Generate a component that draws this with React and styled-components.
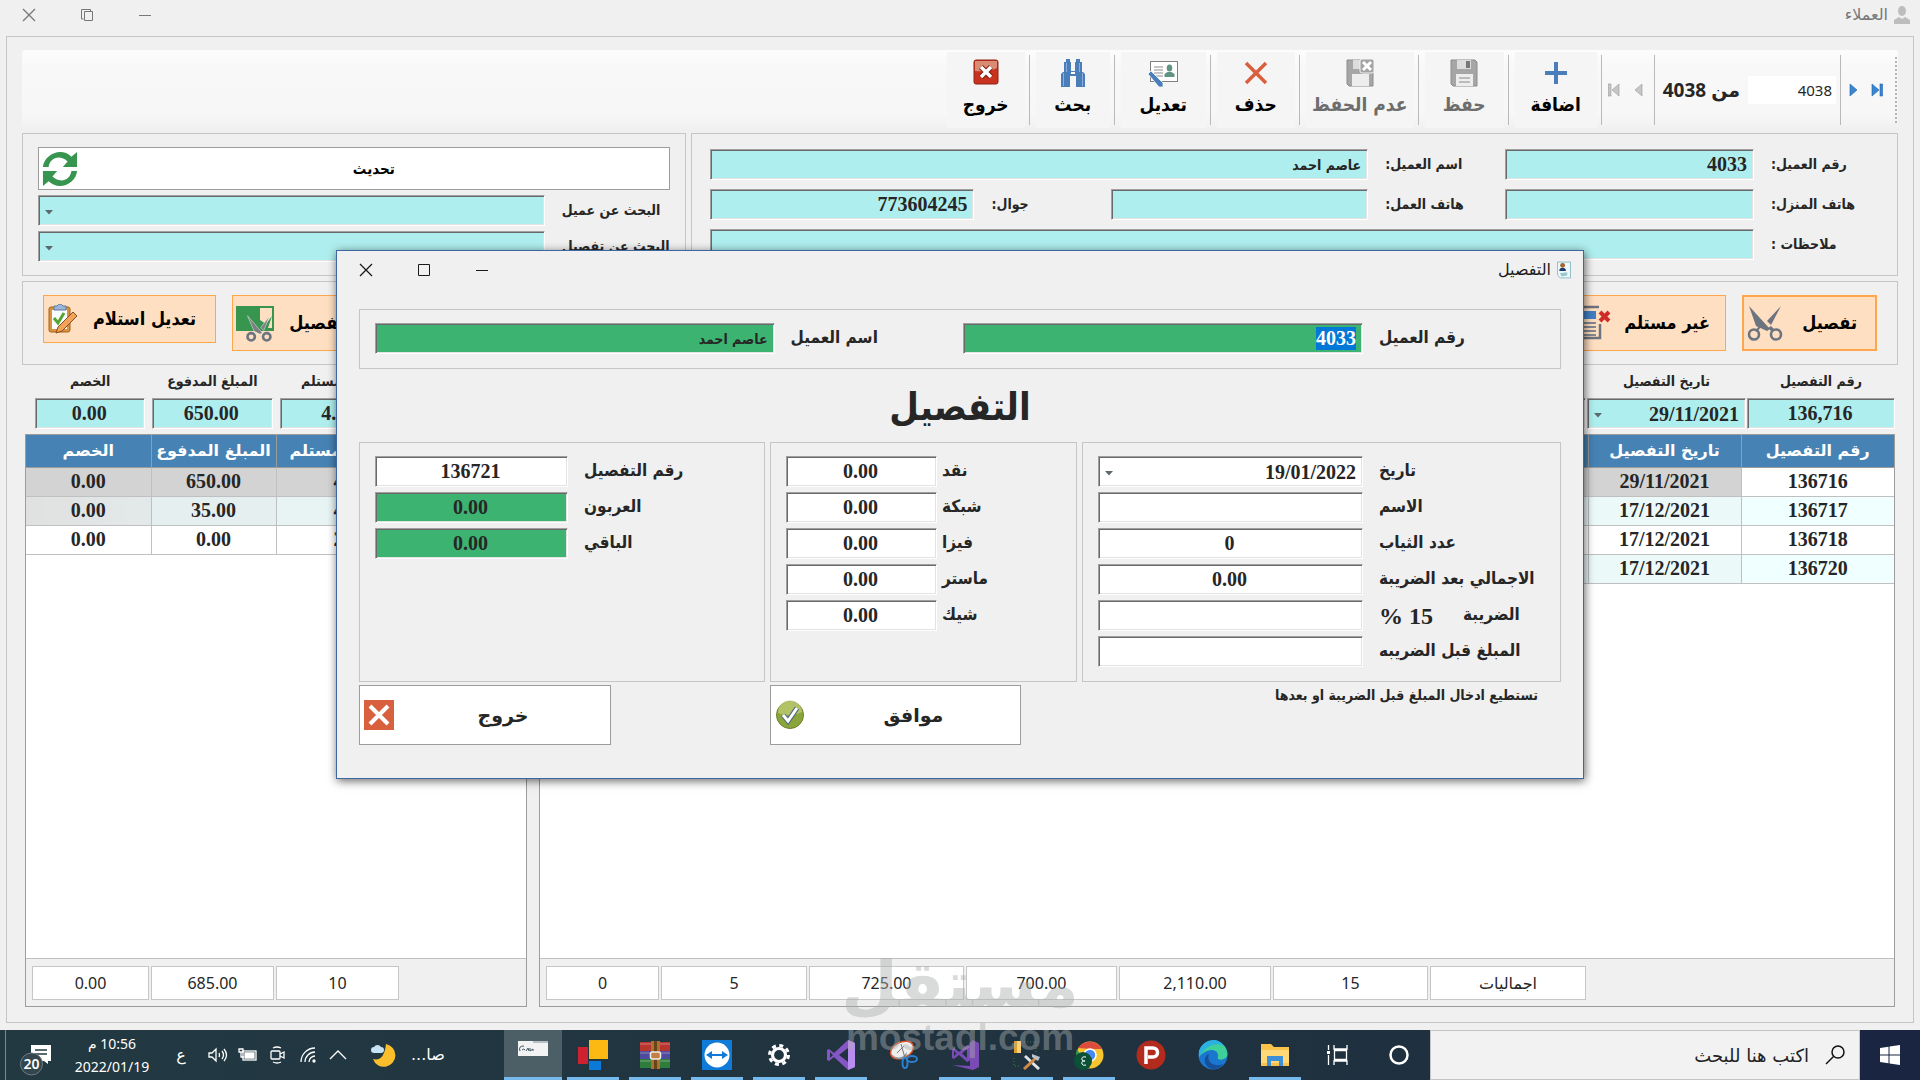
import React, { useEffect, useRef } from "react";
import styled, { createGlobalStyle, css } from "styled-components";

const Global = createGlobalStyle`
  *, *::before, *::after { box-sizing: border-box; }
  html, body { margin: 0; padding: 0; background: #f0f0f0; }
  body { font-family: "Noto Sans", "DejaVu Sans", sans-serif; color: #262626; }
  button, input, select { margin: 0; font: inherit; color: inherit; border-radius: 0; outline: none; }
  button { cursor: pointer; }
`;

const serif = `"Liberation Serif", "DejaVu Sans", serif`;
const sans = `"Noto Sans", "DejaVu Sans", sans-serif`;
const arabic = `"DejaVu Sans", sans-serif`;
const narrow = `"DejaVu Sans Condensed", "DejaVu Sans", sans-serif`;

const Screen = styled.div`
  position: relative;
  min-height: 100vh;
  display: flex;
  flex-direction: column;
  overflow: hidden;
`;

/* ---------- window chrome ---------- */

const TitleBar = styled.header`
  display: flex;
  align-items: center;
  justify-content: space-between;
  height: ${(p) => (p.$dialog ? 38 : 36)}px;
  padding-bottom: ${(p) => (p.$dialog ? 0 : 6)}px;
  padding-right: ${(p) => (p.$dialog ? 12 : 10)}px;
  color: ${(p) => (p.$dialog ? "#1a1a1a" : "#777")};
`;
const Caption = styled.div`
  display: flex;
  align-items: center;
  gap: 6px;
  font: 16px/24px ${arabic};
`;
const ChromeButtons = styled.div`
  display: flex;
`;
const ChromeButton = styled.button`
  width: 58px;
  height: 28px;
  padding: 0;
  border: 0;
  background: none;
  display: grid;
  place-items: center;
`;

const Frame = styled.main`
  flex: 1;
  display: flex;
  flex-direction: column;
  margin: 0 6px 7px;
  padding: 13px 15px 15px;
  border: 1px solid #c6c6c6;
`;

/* ---------- toolbar ---------- */

const Toolbar = styled.div`
  display: flex;
  align-items: center;
  height: 80px;
  margin-bottom: 3px;
  padding-right: 1px;
  border-radius: 4px;
  background: linear-gradient(#fdfdfd, #f8f8f8 20%, #f7f7f7 80%, #f0f0f0);
`;
const Grip = styled.div`
  height: 66px;
  border-right: 2px dotted #b4b4b4;
  margin-left: 6px;
`;
const NavButton = styled.button`
  width: 24px;
  height: 40px;
  padding: 0;
  border: 0;
  background: none;
  display: grid;
  place-items: center;
`;
const Divider = styled.div`
  width: 1px;
  height: 70px;
  margin: 0 ${(p) => (p.$tight ? 0 : 6)}px 0 4px;
  background: #b9b9b9;
`;
const RecordInput = styled.input`
  width: 88px;
  height: 28px;
  padding: 0 4px;
  border: 0;
  background: #fff;
  font: 15px ${sans};
`;
const RecordCount = styled.div`
  padding: 0 8px 0 2px;
  font: 700 19px/28px ${sans};
  white-space: nowrap;
`;
const ToolButton = styled.button`
  display: flex;
  flex-direction: column;
  align-items: center;
  gap: 5px;
  width: ${(p) => p.$w}px;
  height: 76px;
  padding: 7px 0 0;
  border: 0;
  background: #f5f5f5;
  color: ${(p) => (p.disabled ? "#6d6d6d" : "#000")};
  font: 700 19px/24px ${narrow};
  white-space: nowrap;
`;

/* ---------- fields ---------- */

const Panel = styled.section`
  border: 1px solid #c6c6c6;
`;
const sunken = css`
  width: 100%;
  min-width: 0;
  height: 31px;
  padding: 0 6px 0 4px;
  border: 1px solid;
  border-color: #a0a0a0 #fff #fff #a0a0a0;
  box-shadow: inset 1px 1px 0 #696969, inset -1px -1px 0 #e3e3e3;
  background: ${(p) => p.$bg || "#afeeee"};
  font: 700 20px ${serif};
  text-align: ${(p) => (p.$center ? "center" : "right")};
`;
const Field = styled.input`
  ${sunken}
  ${(p) => p.$arabic && `font: 700 14px ${narrow};`}
  &::selection { background: #0078d7; color: #fff; }
`;
const ComboBox = styled.div`
  position: relative;
  min-width: 0;
  svg { position: absolute; left: 7px; top: 15px; pointer-events: none; }
`;
const ComboSelect = styled.select`
  ${sunken}
  appearance: none;
`;
const Label = styled.label`
  font: 700 ${(p) => (p.$big ? "17px/29px" : "14px/31px")} ${narrow};
  white-space: nowrap;
  text-align: left;
`;

function Combo({ id, value = "", bg, label }) {
  return (
    <ComboBox>
      <ComboSelect id={id} $bg={bg} aria-label={label} defaultValue={value}>
        <option value={value}>{value}</option>
      </ComboSelect>
      <svg width="8" height="5"><path d="M0 0h8L4 4.5z" fill="#5c6a70" /></svg>
    </ComboBox>
  );
}

/* ---------- customer and search panels ---------- */

const TopPanels = styled.div`
  display: grid;
  grid-template-columns: minmax(0, 1208fr) minmax(0, 664fr);
  gap: 5px;
`;
const CustomerPanel = styled(Panel)`
  display: grid;
  grid-template-columns: 111px minmax(0, 249fr) 103px minmax(0, 257fr) 103px minmax(0, 265fr);
  column-gap: 17px;
  row-gap: 9px;
  padding: 15px 15px 15px 18px;
`;
const Wide = styled(Field)`
  grid-column: ${(p) => p.$from} / -1;
`;
const SearchPanel = styled(Panel)`
  display: flex;
  flex-direction: column;
  gap: 5px;
  padding: 13px 15px 12px;
`;
const RefreshButton = styled.button`
  display: grid;
  grid-template-columns: 1fr 40px;
  align-items: center;
  height: 43px;
  padding: 0 3px;
  border: 1px solid #9c9c9c;
  background: #fff;
  color: #000;
  font: 700 15px/24px ${narrow};
  svg { justify-self: end; }
`;
const SearchRow = styled.div`
  display: grid;
  grid-template-columns: 108px minmax(0, 1fr);
  gap: 17px;
`;

/* ---------- action bar ---------- */

const Actions = styled(Panel)`
  display: flex;
  align-items: flex-start;
  gap: 16px;
  height: 84px;
  margin-top: 5px;
  padding: 13px 20px;
`;
const Spring = styled.div`
  flex: 1;
`;
const ActionButton = styled.button`
  display: flex;
  flex-direction: row-reverse;
  align-items: center;
  justify-content: space-between;
  width: ${(p) => p.$w}px;
  height: ${(p) => (p.$short ? 48 : 56)}px;
  padding: 0 ${(p) => p.$pad || 18}px 0 3px;
  border: ${(p) => (p.$main ? 2 : 1)}px solid #ffa64d;
  background: #ffdfc1;
  color: #000;
  font: 700 18px/28px ${narrow};
  white-space: nowrap;
`;

/* ---------- grids ---------- */

const Lists = styled.div`
  flex: 1;
  display: grid;
  grid-template-columns: minmax(0, 1356fr) minmax(0, 502fr);
  gap: 12px;
  padding: 0 3px;
`;
const ListSection = styled.section`
  display: flex;
  flex-direction: column;
`;
const EntryFields = styled.div`
  display: grid;
  grid-template-columns: ${(p) => p.$cols};
  column-gap: ${(p) => p.$gap}px;
  padding-left: ${(p) => p.$pl || 0}px;
  margin-bottom: 5px;
`;
const EntryField = styled.div`
  display: flex;
  flex-direction: column;
  min-width: 0;
`;
const EntryLabel = styled.label`
  height: 33px;
  font: 700 14px/33px ${narrow};
  text-align: center;
  white-space: nowrap;
`;
const GridBox = styled.div`
  flex: 1;
  display: flex;
  flex-direction: column;
  border: 1px solid #9c9c9c;
  background: #fff;
`;
const Table = styled.table`
  width: 100%;
  border-collapse: collapse;
  table-layout: fixed;
`;
const Th = styled.th`
  height: 32px;
  padding: 0;
  border-left: 1px solid #9c9c9c;
  border-bottom: 1px solid #9c9c9c;
  background: #4682b4;
  color: #fff;
  font: 700 16px/30px ${arabic};
  white-space: nowrap;
  &:last-child { border-left: 0; }
`;
const Td = styled.td`
  height: 29px;
  padding: 0 0 2px;
  border-left: 1px solid #c0c0c0;
  border-bottom: 1px solid #c0c0c0;
  background: ${(p) => p.$bg || "#fff"};
  font: 700 20px/26px ${serif};
  text-align: center;
  &:last-child { border-left: 0; }
`;
const Totals = styled.div`
  display: flex;
  justify-content: flex-end;
  gap: 2px;
  margin-top: auto;
  padding: 7px 6px 6px;
  border-top: 1px solid #c0c0c0;
  background: #f0f0f0;
`;
const Total = styled.output`
  width: ${(p) => p.$w}px;
  height: 34px;
  border: 1px solid #c6c6c6;
  background: #fff;
  font: 16px/33px ${sans};
  text-align: center;
`;

/* ---------- dialog ---------- */

const Dialog = styled.section`
  position: absolute;
  top: 250px;
  left: 0;
  right: 0;
  width: 1248px;
  margin: 0 auto;
  padding-bottom: 33px;
  border: 1px solid #3f679f;
  background: #f0f0f0;
  box-shadow: 1px 2px 9px rgba(0, 0, 0, 0.6);
`;
const DialogBody = styled.div`
  padding: 20px 22px 0;
`;
const Identity = styled(Panel)`
  display: grid;
  grid-template-columns: 166px minmax(0, 401fr) 156px minmax(0, 400fr);
  column-gap: 16px;
  padding: 13px 15px 14px 15px;
`;
const DialogTitle = styled.h1`
  margin: 0;
  height: 73px;
  font: 700 38px/76px ${narrow};
  text-align: center;
`;
const Groups = styled.div`
  display: grid;
  grid-template-columns: 479fr 307fr 406fr;
  gap: 5px;
`;
const Group = styled(Panel)`
  display: grid;
  grid-template-columns: minmax(0, 1fr) ${(p) => p.$field}px;
  grid-auto-rows: 31px;
  align-content: start;
  column-gap: ${(p) => p.$gap || 16}px;
  row-gap: 5px;
  height: 240px;
  padding: 13px 15px;
`;
const TaxLabel = styled(Label)`
  display: flex;
  justify-content: flex-end;
  gap: 30px;
  b { font: 700 24px/33px ${serif}; }
`;
const DialogFooter = styled.footer`
  display: grid;
  grid-template-columns: 540fr 251fr 159fr 252fr;
  margin-top: 3px;
`;
const Hint = styled.p`
  margin: 0;
  padding-right: 23px;
  font: 700 14px/20px ${narrow};
  white-space: nowrap;
`;
const DialogButton = styled.button`
  display: grid;
  grid-template-columns: 1fr 36px;
  align-items: center;
  height: 60px;
  padding: 0 1px;
  border: 1px solid #9c9c9c;
  background: #fff;
  font: 700 19px/28px ${arabic};
  svg { justify-self: center; }
`;

/* ---------- taskbar ---------- */

const Taskbar = styled.footer`
  display: flex;
  height: 50px;
  background: linear-gradient(90deg, #223942, #20323f 60%, #1c2c40);
  color: #fff;
`;
const StartButton = styled.button`
  width: 60px;
  padding: 0;
  border: 0;
  background: #1a2542;
  display: grid;
  place-items: center;
`;
const SearchBox = styled.label`
  display: flex;
  align-items: center;
  gap: 16px;
  width: 430px;
  padding: 0 14px;
  border: 1px solid #c4c4c4;
  background: #f2f2f2;
  input {
    flex: 1;
    min-width: 0;
    border: 0;
    padding: 0;
    background: none;
    color: #222;
    font: 18px ${arabic};
  }
  input::placeholder { color: #222; opacity: 1; }
`;
const TaskButton = styled.button`
  width: 62px;
  padding: 0;
  display: grid;
  place-items: center;
  border: 0 solid transparent;
  border-width: 0 5px;
  background: ${(p) => (p.$active ? "#4c5e66" : "none")} padding-box;
  box-shadow: ${(p) => (p.$open ? "inset 0 -3px 0 #76b9ed" : "none")};
  ${(p) => p.$active && "border-width: 0 0 0 4px;"}
`;
const Tray = styled.div`
  display: flex;
  align-items: center;
  margin-right: auto;
  padding-left: 5px;
`;
const Weather = styled.div`
  display: flex;
  align-items: center;
  gap: 14px;
  margin-left: 18px;
  font: 16px/24px ${arabic};
`;
const TrayIcon = styled.div`
  width: ${(p) => p.$w || 30}px;
  display: grid;
  place-items: center;
  font: 16px/24px ${arabic};
`;
const Clock = styled.div`
  width: 94px;
  text-align: center;
  font: 14px/23px ${sans};
`;
const Notice = styled.div`
  width: 60px;
  height: 50px;
  border-left: 1px solid #82898c;
  display: grid;
  place-items: center;
`;

const Watermark = styled.div`
  position: absolute;
  bottom: 22px;
  left: 845px;
  width: 230px;
  display: flex;
  flex-direction: column;
  align-items: center;
  color: rgba(170, 174, 174, 0.45);
  pointer-events: none;
  white-space: nowrap;
`;
const WatermarkName = styled.span`
  font: 700 65px/66px ${arabic};
`;
const WatermarkSite = styled.span`
  font: 700 37px/40px "Liberation Sans", sans-serif;
`;

/* ---------- drawings ---------- */

const Person = () => (
  <svg width="16" height="18" viewBox="0 0 16 18" fill="#bdbdbd">
    <ellipse cx="8" cy="5" rx="4" ry="5" /><path d="M0 18v-4l5-3 3 2 3-2 5 3v4z" />
  </svg>
);
const PersonCard = () => (
  <svg width="14" height="18" viewBox="0 0 15 18">
    <path d="M.5.5h14v17h-11l-3-3z" fill="#eef8fa" stroke="#8ab9c4" />
    <path d="M2.500 10q0-3.500 3.500-3.500T9.500 10z" fill="#1e3a6e" /><circle cx="6" cy="4" r="2.600" fill="#a4622f" />
    <path d="M3 12.500l8-1v3.500l-6 1z" fill="#9cc8d0" />
  </svg>
);
const CloseX = () => (
  <svg width="14" height="14" stroke="currentColor" strokeWidth="1.3"><path d="M1 1l12 12M13 1L1 13" /></svg>
);
const Restore = () => (
  <svg width="12" height="12" fill="none" stroke="currentColor"><path d="M3.500 2.500h8v9h-8zM2.500 10H.5V.5h9v2" /></svg>
);
const Maximize = () => (
  <svg width="12" height="12" fill="none" stroke="currentColor"><path d="M.5.5h11v11H.5z" /></svg>
);
const Minimize = () => (
  <svg width="12" height="12" stroke="currentColor"><path d="M0 6.500h12" /></svg>
);
const Nav = ({ d, last, on }) => (
  <svg width="12" height="14" viewBox="0 0 12 14" fill={on ? "#3a86d0" : "#c6c6c6"} stroke={on ? "#1d63ae" : "#999"} strokeWidth=".6">
    <path d={d} />{last && <rect x={last} y="1" width="2.500" height="12" />}
  </svg>
);
const Plus = () => (
  <svg width="24" height="28" viewBox="0 0 24 28"><path d="M12 3v22M1 14h22" stroke="#4a7ebb" strokeWidth="4" /></svg>
);
const Cross = () => (
  <svg width="24" height="28" viewBox="0 0 24 28"><path d="M2 4l20 20M22 4L2 24" stroke="#d9603f" strokeWidth="3.500" /></svg>
);
const Floppy = ({ cancel }) => (
  <svg width="28" height="28" viewBox="0 0 28 28">
    <path d="M1 1h24l2 2v24H3l-2-2z" fill="#a6a6a6" stroke="#8c8c8c" />
    <rect x="7" y="1" width="14" height="9" fill="#dcdcdc" /><rect x="16" y="2" width="4" height="7" fill="#777" />
    <rect x="6" y="15" width="17" height="12" fill="#ededed" />
    {!cancel && <path d="M9 19h11M9 23h11" stroke="#aaa" strokeWidth="1.500" />}
    {cancel && <><rect x="14" y="0" width="14" height="14" rx="2" fill="#a4a4a4" stroke="#f2f2f2" /><path d="M17 3l8 8M25 3l-8 8" stroke="#fff" strokeWidth="3" /></>}
  </svg>
);
const EditCard = () => (
  <svg width="30" height="28" viewBox="0 0 30 28">
    <rect x="2.500" y="2.500" width="27" height="20" fill="#fff" stroke="#808080" />
    <path d="M6 8h9M6 11h9M6 14h9M8 17h7" stroke="#8a8a8a" />
    <ellipse cx="21.500" cy="9" rx="2.800" ry="3.500" fill="#5f9482" /><path d="M16.500 18v-3l3-2h4l3 2v3z" fill="#5f9482" />
    <path d="M0 15l3-3 12 12v4h-4z" fill="#4a7ebb" stroke="#fff" strokeWidth=".7" />
  </svg>
);
const Binoculars = () => (
  <svg width="24" height="28" viewBox="0 0 24 28" fill="#4a7ebb">
    <path d="M5 0h4v3h1v9h4V3h1V0h4v3h2v10h1l2 2v13h-9V17h-6v11H0V15l2-2h1V3h2z" />
    <path d="M2.500 14v13M21.500 14v13M5.500 4v9M18.500 4v9" stroke="#9db9df" strokeWidth=".8" /><rect x="10" y="13" width="4" height="2" fill="#fff" />
  </svg>
);
const ExitRed = () => (
  <svg width="26" height="28" viewBox="0 0 26 28">
    <rect x="1" y="1" width="24" height="24" rx="2" fill="#c8321f" stroke="#8f2416" />
    <path d="M2 2h22v7q-8 4-22 3z" fill="#e0aa92" opacity=".75" />
    <path d="M8 8l10 10M18 8L8 18" stroke="#7c1c10" strokeWidth="5.500" /><path d="M8 8l10 10M18 8L8 18" stroke="#fff" strokeWidth="3.500" />
  </svg>
);
const RefreshIcon = () => (
  <svg width="36" height="38" viewBox="0 0 38 38" fill="#38954f">
    <path d="M1 17C2 4 20-5 31 6l6-5v16H22l5-6C18 3 8 8 7 17z" />
    <path d="M37 21c-1 13-19 22-30 11l-6 5V21h15l-5 6c9 8 19 3 20-6z" />
  </svg>
);
const Scissors = () => (
  <svg width="36" height="36" viewBox="0 0 36 36" fill="#6d7480">
    <path d="M2 1l21 23-3 2-11-5zM34 1L20 16l4 4z" />
    <g fill="none" stroke="#6d7480" strokeWidth="2.600"><circle cx="7" cy="29.500" r="5" /><circle cx="29" cy="29.500" r="5" /></g>
    <path d="M12 21l2 1-4 5-2-1zM21 23l3-2 4 4-3 2z" />
  </svg>
);
const CutGreen = () => (
  <svg width="40" height="40" viewBox="2 0 40 40">
    <rect x="1" y="3" width="39" height="25" fill="#38954f" /><path d="M26 5h12v20h-4l4-12-6 8-6-4z" fill="#ffdfc1" />
    <g transform="translate(12 12) scale(.74)"><path d="M2 1l20 23-3 2-8-4zM32 1L20 17l4 4z" fill="#7d7f83" stroke="#fff" strokeWidth=".6" />
      <g fill="none" stroke="#6d7480" strokeWidth="3.500"><circle cx="7" cy="29.500" r="5" /><circle cx="28" cy="29.500" r="5" /></g></g>
  </svg>
);
const NotReceived = () => (
  <svg width="42" height="36" viewBox="0 0 42 36">
    <path d="M2 2h27M2 33h28V19" fill="none" stroke="#6d7480" strokeWidth="2.500" />
    <rect x="4" y="6" width="22" height="8" fill="#3f7fc4" /><path d="M4 18h22M4 22h22M4 26h22M4 30h22" stroke="#84888f" strokeWidth="2" />
    <path d="M30 7l9 9M39 7l-9 9" stroke="#cf2a27" strokeWidth="4" />
  </svg>
);
const Clipboard = () => (
  <svg width="30" height="30" viewBox="0 0 30 30">
    <rect x="2" y="3" width="21" height="25" rx="2" fill="#d9923e" stroke="#a6631c" /><rect x="5" y="6" width="15" height="19" fill="#fafcff" />
    <path d="M7 2h3q3-4 6 0h3v4H7z" fill="#9bb6d6" stroke="#5a7ba3" />
    <path d="M7 14l4 5 6-10" fill="none" stroke="#57a433" strokeWidth="3" />
    <path d="M9 29l2-6L26 8l4 4-15 15z" fill="#f3a25a" stroke="#8a4b1c" />
  </svg>
);
const OkIcon = () => (
  <svg width="28" height="30" viewBox="0 0 28 30">
    <circle cx="14" cy="15" r="13.500" fill="#8aa63a" stroke="#6d7f35" /><path d="M2 13a12 12 0 0 1 24-1q-11 6-24 1z" fill="#bccb72" opacity=".8" />
    <path d="M7 15l5 6 9-13" fill="none" stroke="#4e6580" strokeWidth="5" /><path d="M7 15l5 6 9-13" fill="none" stroke="#fff" strokeWidth="3" />
  </svg>
);
const ExitOrange = () => (
  <svg width="30" height="30" viewBox="0 0 30 30"><path d="M0 0h30v30H0z" fill="#d9603f" /><path d="M6 6l18 18M24 6L6 24" stroke="#fff" strokeWidth="4" /></svg>
);

const S = ({ children }) => <svg width="30" height="30" viewBox="0 0 30 30">{children}</svg>;
const icons = {
  cortana: <S><circle cx="15" cy="15" r="8.500" fill="none" stroke="#fff" strokeWidth="2.500" /></S>,
  tasks: <S><path d="M6.500 10v-5M6.500 15v10M12 5v4h13V5M12 25v-4h13v4M12.500 10.500h12v9h-12z" fill="none" stroke="#fff" strokeWidth="1.300" /><rect x="5" y="11" width="3" height="3" fill="#fff" /></S>,
  folder: <S><path d="M1 4h10l3 3h15v19H1z" fill="#f8c24b" /><path d="M1 10h28v13H1z" fill="#ffd978" /><path d="M7 26V16h16v10h-4v-5h-8v5z" fill="#3d8fd8" /></S>,
  edge: <S><circle cx="15" cy="15" r="14.500" fill="#1b76ce" /><path d="M1 12C4-2 28-4 29.500 14c0 6-9 7-10 4 2-4-1-8-6-8S3 14 1 17z" fill="#3fcf9a" /><path d="M1 12C4-1 20-4 26 6 16 1 6 8 1 17z" fill="#2bb2e3" /><path d="M11 14c-3 8 5 14 14 10-5 7-16 7-18-2-1-4 1-7 4-8z" fill="#164f9a" /></S>,
  pick: <S><circle cx="15" cy="15" r="14.500" fill="#b32b1c" /><path d="M10 24V8h7a4.500 4.500 0 0 1 0 9h-5" fill="none" stroke="#fff" strokeWidth="3.500" /></S>,
  chrome: <S><circle cx="16" cy="15" r="13.500" fill="#f7c52f" /><path d="M4 8a14 14 0 0 1 24 1H16z" fill="#dc4b3c" /><path d="M3 9l7 12 6 7A14 14 0 0 1 3 9z" fill="#2f9e53" /><circle cx="16" cy="15" r="6" fill="#4a8af0" stroke="#fff" strokeWidth="1.500" /><circle cx="9" cy="21" r="9" fill="#0b5138" /><path d="M12 17q-5-1-4 3 1 1 3 1-4 0-3 3 1 2 4 1" fill="none" stroke="#fff" /></S>,
  tools: <S><rect x="2" y="1" width="7" height="12" fill="#e3a02c" /><path d="M5 1h4v12H5z" fill="#f7d27a" /><path d="M12 2h12v10M2 18v8h6" fill="none" stroke="#2d8a3c" strokeDasharray="1 2" /><path d="M13 16l14 13" stroke="#dfe5e8" strokeWidth="3" /><path d="M25 17L12 29" stroke="#d28b42" strokeWidth="3" /><path d="M20 14l8 3-2 4-6-4z" fill="#b9c2c8" /></S>,
  installer: <S><path d="M23 0l6 3v24l-6 3L2 25l18 1V3z" fill="#7a4bb5" /><path d="M2 10l2-2 5 4 8-7 3 1.500v14L17 22l-8-7-5 4-2-1z" fill="#7a4bb5" /><path d="M17 9v9l-5-4.500zM4 11v5l2.500-2.500z" fill="#20323f" /></S>,
  snip: <S><ellipse cx="14" cy="10" rx="12" ry="8" transform="rotate(-25 14 10)" fill="#eee" stroke="#d6552c" strokeWidth="1.500" /><path d="M3 14q9 8 16-2l-1 6q-9 4-15-4z" fill="#8f979c" /><path d="M9 13l7-7M13 4l4 14" stroke="#777" /><g fill="none" stroke="#2d7fd0" strokeWidth="2"><ellipse cx="17" cy="23" rx="2.500" ry="5" /><ellipse cx="24" cy="19" rx="5" ry="3" /></g></S>,
  vs: <S><path d="M22 0l7 3v24l-7 3L8 17l-5 4-2-1V10l2-1 5 4z" fill="#8557c5" /><path d="M22 8v14l-9-7zM4 12v6l3-3z" fill="#20323f" /><path d="M22 0l7 3v24l-7 3z" fill="#b98cf0" /></S>,
  gear: <S><circle cx="15" cy="15" r="9.500" fill="none" stroke="#fff" strokeWidth="3" strokeDasharray="4 3.460" /><circle cx="15" cy="15" r="6.500" fill="none" stroke="#fff" strokeWidth="3.200" /></S>,
  team: <S><path d="M0 0h30v30H0z" fill="#0f7ad8" /><circle cx="15" cy="15" r="12.500" fill="#fff" /><path d="M4 15l6-4v3h10v-3l6 4-6 4v-3H10v3z" fill="#0f7ad8" /></S>,
  rar: <S><path d="M0 2h30v9H0z" fill="#b8352f" /><path d="M0 11h30v8H0z" fill="#4e4a9c" /><path d="M0 19h30v9H0z" fill="#2f7d3c" /><path d="M0 4h30M0 13h30M0 21h30" stroke="#fff" strokeOpacity=".35" /><path d="M11 1h9v28h-9z" fill="#a8752e" /><path d="M14 1h3v28h-3z" fill="#6b4318" /><rect x="10.500" y="12" width="10" height="7" rx="2" fill="#c47f45" stroke="#eee" strokeWidth="1.500" /></S>,
  blocks: <S><path d="M0 7h10v17H0z" fill="#cf2230" /><path d="M11 0h19v19H11z" fill="#fdb913" /><path d="M11 21h12v9H11z" fill="#0b7ad8" /></S>,
  doc: <S><path d="M0 1h30v15H0z" fill="#f3f3f3" /><path d="M15 2h15" stroke="#b9bfc2" strokeWidth="2" /><path d="M2 11q-2-5 4-5M4 10q2-2 3 0M8 11l2-3 1 3M12 8v3l3-2v2" fill="none" stroke="#3f5560" /></S>,
};

const apps = [
  ["cortana", "Cortana"], ["tasks", "عرض المهام"], ["folder", "مستكشف الملفات", 1], ["edge", "Edge"], ["pick", "PicPick"],
  ["chrome", "Chrome", 1], ["tools", "Tools", 1], ["installer", "Visual Studio Installer", 1], ["snip", "Snipping Tool"],
  ["vs", "Visual Studio", 1], ["gear", "الإعدادات", 1], ["team", "TeamViewer", 1], ["rar", "WinRAR", 1], ["blocks", "Blocks", 1], ["doc", "التفصيل", 1, 1],
];

const line = { fill: "none", stroke: "#fff", strokeWidth: 1.3 };

/* ---------- data ---------- */

const toolbar = [
  ["اضافة", 82, <Plus />], ["حفظ", 79, <Floppy />, true], ["عدم الحفظ", 108, <Floppy cancel />, true], ["حذف", 78, <Cross />],
  ["تعديل", 85, <EditCard />], ["بحث", 74, <Binoculars />], ["خروج", 78, <ExitRed />],
];
const orders = [
  ["136716", "29/11/2021", "#fff", "#d3d3d3"],
  ["136717", "17/12/2021", "#f0ffff", "#ecf9f9"],
  ["136718", "17/12/2021", "#fff", "#fff"],
  ["136720", "17/12/2021", "#f0ffff", "#ecf9f9"],
];
const receipts = [
  ["", "4", "650.00", "0.00"],
  ["", "4", "35.00", "0.00"],
  ["", "2", "0.00", "0.00"],
];
const receiptShade = ["#d3d3d3", null, "#fff"];
const rowTwoShade = ["#e8f3f3", "#e8f3f3", "#e5efef", "linear-gradient(90deg, #e0e0e0, #e3e9e9)"];
const orderTotals = [["اجماليات", 156], ["15", 155], ["2,110.00", 152], ["700.00", 151], ["725.00", 155], ["5", 146], ["0", 113]];
const receiptTotals = [["10", 123], ["685.00", 123], ["0.00", 117]];
const payments = ["نقد", "شبكة", "فيزا", "ماستر", "شيك"];

function Chrome({ dialog, title, icon }) {
  return (
    <TitleBar $dialog={dialog}>
      <Caption>{icon}<span>{title}</span></Caption>
      <ChromeButtons>
        <ChromeButton aria-label="تصغير"><Minimize /></ChromeButton>
        <ChromeButton aria-label="تكبير">{dialog ? <Maximize /> : <Restore />}</ChromeButton>
        <ChromeButton aria-label="إغلاق"><CloseX /></ChromeButton>
      </ChromeButtons>
    </TitleBar>
  );
}

function DetailDialog() {
  const first = useRef(null);
  useEffect(() => {
    first.current.focus();
    first.current.select();
  }, []);
  return (
    <Dialog role="dialog" aria-label="التفصيل">
      <Chrome dialog title="التفصيل" icon={<PersonCard />} />
      <DialogBody>
        <Identity>
          <Label $big htmlFor="d-no">رقم العميل</Label>
          <Field id="d-no" ref={first} $bg="#3cb371" defaultValue="4033" />
          <Label $big htmlFor="d-name">اسم العميل</Label>
          <Field id="d-name" $bg="#3cb371" $arabic defaultValue="عاصم احمد" />
        </Identity>
        <DialogTitle>التفصيل</DialogTitle>
        <Groups>
          <Group $field={265}>
            <Label $big htmlFor="d-date">تاريخ</Label>
            <Combo id="d-date" bg="#fff" value="19/01/2022" />
            <Label $big htmlFor="d-title">الاسم</Label>
            <Field id="d-title" $bg="#fff" $center />
            <Label $big htmlFor="d-count">عدد الثياب</Label>
            <Field id="d-count" $bg="#fff" $center defaultValue="0" />
            <Label $big htmlFor="d-gross">الاجمالي بعد الضريبة</Label>
            <Field id="d-gross" $bg="#fff" $center defaultValue="0.00" />
            <TaxLabel $big htmlFor="d-tax"><span>الضريبة</span><b>15 %</b></TaxLabel>
            <Field id="d-tax" $bg="#fff" $center />
            <Label $big htmlFor="d-net">المبلغ قبل الضريبه</Label>
            <Field id="d-net" $bg="#fff" $center />
          </Group>
          <Group $field={151} $gap={5}>
            {payments.map((p) => (
              <React.Fragment key={p}>
                <Label $big htmlFor={"pay-" + p}>{p}</Label>
                <Field id={"pay-" + p} $bg="#fff" $center defaultValue="0.00" />
              </React.Fragment>
            ))}
          </Group>
          <Group $field={193}>
            <Label $big htmlFor="d-order">رقم التفصيل</Label>
            <Field id="d-order" $bg="#fff" $center defaultValue="136721" />
            <Label $big htmlFor="d-deposit">العربون</Label>
            <Field id="d-deposit" $bg="#3cb371" $center defaultValue="0.00" />
            <Label $big htmlFor="d-rest">الباقي</Label>
            <Field id="d-rest" $bg="#3cb371" $center defaultValue="0.00" />
          </Group>
        </Groups>
        <DialogFooter>
          <Hint>تستطيع ادخال المبلغ قبل الضريبة او بعدها</Hint>
          <DialogButton><span>موافق</span><OkIcon /></DialogButton>
          <div />
          <DialogButton><span>خروج</span><ExitOrange /></DialogButton>
        </DialogFooter>
      </DialogBody>
    </Dialog>
  );
}

export default function App() {
  return (
    <Screen dir="rtl" lang="ar">
      <Global />
      <Chrome title="العملاء" icon={<Person />} />
      <Frame>
        <Toolbar>
          <Grip />
          <NavButton aria-label="الأخير"><Nav on d="M1 1l7 6-7 6z" last="9" /></NavButton>
          <NavButton aria-label="التالي"><Nav on d="M3 1l7 6-7 6z" /></NavButton>
          <Divider $tight />
          <RecordInput aria-label="السجل" defaultValue="4038" />
          <RecordCount>من 4038</RecordCount>
          <Divider />
          <NavButton aria-label="السابق"><Nav d="M10 1L3 7l7 6z" /></NavButton>
          <NavButton aria-label="الأول"><Nav d="M11 1L4 7l7 6z" last=".5" /></NavButton>
          <Divider $tight />
          {toolbar.map(([text, w, icon, off], i) => (
            <React.Fragment key={text}>
              {i > 0 && <Divider />}
              <ToolButton $w={w} disabled={off}>{icon}<span>{text}</span></ToolButton>
            </React.Fragment>
          ))}
        </Toolbar>

        <TopPanels>
          <CustomerPanel>
            <Label htmlFor="c-no">رقم العميل:</Label>
            <Field id="c-no" defaultValue="4033" />
            <Label htmlFor="c-name">اسم العميل:</Label>
            <Wide $from={4} $arabic id="c-name" defaultValue="عاصم احمد" />
            <Label htmlFor="c-home">هاتف المنزل:</Label>
            <Field id="c-home" />
            <Label htmlFor="c-work">هاتف العمل:</Label>
            <Field id="c-work" />
            <Label htmlFor="c-mobile">جوال:</Label>
            <Field id="c-mobile" defaultValue="773604245" />
            <Label htmlFor="c-notes">ملاحظات :</Label>
            <Wide $from={2} id="c-notes" />
          </CustomerPanel>
          <SearchPanel>
            <RefreshButton><span>تحديث</span><RefreshIcon /></RefreshButton>
            <SearchRow><Label htmlFor="s-customer">البحث عن عميل</Label><Combo id="s-customer" /></SearchRow>
            <SearchRow><Label htmlFor="s-order">البحث عن تفصيل</Label><Combo id="s-order" /></SearchRow>
          </SearchPanel>
        </TopPanels>

        <Actions>
          <ActionButton $w={135} $main><Scissors />تفصيل</ActionButton>
          <ActionButton $w={160} $pad={15}><NotReceived />غير مستلم</ActionButton>
          <Spring />
          <ActionButton $w={135} $pad={22}><CutGreen />تفصيل</ActionButton>
          <ActionButton $w={173} $short $pad={19}><Clipboard />تعديل استلام</ActionButton>
        </Actions>

        <Lists>
          <ListSection>
            <EntryFields $cols="148px 159px minmax(0, 1fr)" $gap={1}>
              <EntryField><EntryLabel htmlFor="e-no">رقم التفصيل</EntryLabel><Field id="e-no" $center defaultValue="136,716" /></EntryField>
              <EntryField><EntryLabel htmlFor="e-date">تاريخ التفصيل</EntryLabel><Combo id="e-date" value="29/11/2021" /></EntryField>
              <EntryField><EntryLabel as="div" /><Field aria-label="الاسم" /></EntryField>
            </EntryFields>
            <GridBox>
              <Table>
                <colgroup><col style={{ width: 153 }} /><col style={{ width: 153 }} /><col /></colgroup>
                <thead><tr><Th>رقم التفصيل</Th><Th>تاريخ التفصيل</Th><Th /></tr></thead>
                <tbody>
                  {orders.map(([no, date, a, b]) => (
                    <tr key={no}><Td $bg={a}>{no}</Td><Td $bg={b}>{date}</Td><Td $bg={b} /></tr>
                  ))}
                </tbody>
              </Table>
              <Totals>{orderTotals.map(([t, w]) => <Total key={t} $w={w}>{t}</Total>)}</Totals>
            </GridBox>
          </ListSection>

          <ListSection>
            <EntryFields $cols="120fr 120fr 120fr 110fr" $gap={7} $pl={10}>
              <EntryField><EntryLabel as="div" /><Field aria-label="التاريخ" /></EntryField>
              <EntryField><EntryLabel htmlFor="r-count">عدد المستلم</EntryLabel><Field id="r-count" $center defaultValue="4.00" /></EntryField>
              <EntryField><EntryLabel htmlFor="r-paid">المبلغ المدفوع</EntryLabel><Field id="r-paid" $center defaultValue="650.00" /></EntryField>
              <EntryField><EntryLabel htmlFor="r-off">الخصم</EntryLabel><Field id="r-off" $center defaultValue="0.00" /></EntryField>
            </EntryFields>
            <GridBox>
              <Table>
                <thead><tr><Th /><Th>عدد المستلم</Th><Th>المبلغ المدفوع</Th><Th>الخصم</Th></tr></thead>
                <tbody>
                  {receipts.map((row, i) => (
                    <tr key={i}>{row.map((v, j) => <Td key={j} $bg={receiptShade[i] || rowTwoShade[j]}>{v}</Td>)}</tr>
                  ))}
                </tbody>
              </Table>
              <Totals>{receiptTotals.map(([t, w]) => <Total key={t} $w={w}>{t}</Total>)}</Totals>
            </GridBox>
          </ListSection>
        </Lists>
      </Frame>

      <Taskbar>
        <StartButton aria-label="ابدأ">
          <svg width="20" height="20" fill="#fff"><path d="M0 3l8.500-1.200V9.500H0zM9.500 1.600L20 0v9.500H9.500zM0 10.500h8.500v7.700L0 17zM9.500 10.500H20V20L9.500 18.400z" /></svg>
        </StartButton>
        <SearchBox>
          <svg width="20" height="20" fill="none" stroke="#111" strokeWidth="1.500"><circle cx="13" cy="7" r="6" /><path d="M8.500 11.500L1 19" /></svg>
          <input aria-label="بحث" placeholder="اكتب هنا للبحث" />
        </SearchBox>
        {apps.map(([key, name, open, active]) => (
          <TaskButton key={key} aria-label={name} $open={open} $active={active}>{icons[key]}</TaskButton>
        ))}
        <Tray>
          <Weather>
            <span>صا...</span>
            <svg width="26" height="24" viewBox="0 0 26 24"><path d="M15 1a11.500 11.500 0 1 1-13 15Q13 19 15 1z" fill="#fbbf2d" /><path d="M3 10a3 3 0 0 1 0-6 4 4 0 0 1 7 0 3 3 0 0 1 0 6z" fill="#c5e3f5" /></svg>
          </Weather>
          <TrayIcon><svg width="18" height="12" {...line}><path d="M1 10l8-8 8 8" /></svg></TrayIcon>
          <TrayIcon><svg width="16" height="16" {...line}><path d="M1 15A14 14 0 0 1 15 1M5 15A10 10 0 0 1 15 5M9 15a6 6 0 0 1 6-6" /><circle cx="14" cy="14" r="1" fill="#fff" /></svg></TrayIcon>
          <TrayIcon><svg width="16" height="18" {...line}><rect x="1" y="5" width="9" height="8" rx="1" /><path d="M10 8l4-2v6l-4-2M3 2q4-2 8 0M3 16q4 2 8 0" /></svg></TrayIcon>
          <TrayIcon><svg width="20" height="16" {...line}><rect x="5" y="4" width="13" height="9" /><path d="M7 6h9v5H7z" fill="#fff" /><path d="M1 2h4v3H1zM3 5v5h3" /></svg></TrayIcon>
          <TrayIcon><svg width="20" height="16" {...line}><path d="M1 6h3l4-4v12l-4-4H1zM11 6q1 2 0 4M14 4q3 4 0 8M16 2q5 6 0 12" /></svg></TrayIcon>
          <TrayIcon $w={44}>ع</TrayIcon>
          <Clock><div>10:56 م</div><div dir="ltr">2022/01/19</div></Clock>
          <Notice>
            <svg width="34" height="42" viewBox="0 0 34 42"><path d="M12 11h20v16h-3v3l-4-3H12z" fill="#fff" /><path d="M16 16h12M16 20h12" stroke="#223942" strokeWidth="1.300" /><circle cx="12.500" cy="30" r="11" fill="#33454d" stroke="#6f7c82" /><text x="12.500" y="35" fill="#fff" fontFamily="Noto Sans" fontSize="14" fontWeight="600" textAnchor="middle" direction="ltr">20</text></svg>
          </Notice>
        </Tray>
      </Taskbar>

      <DetailDialog />
      <Watermark aria-hidden="true">
        <WatermarkName>مستقل</WatermarkName>
        <WatermarkSite>mostaql.com</WatermarkSite>
      </Watermark>
    </Screen>
  );
}
